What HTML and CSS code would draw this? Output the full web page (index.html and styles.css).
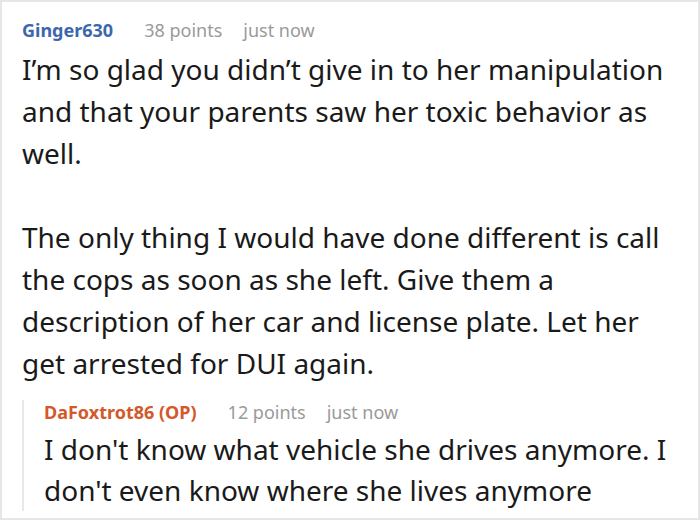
FILE: index.html
```html
<!DOCTYPE html>
<html>
<head>
<meta charset="utf-8">
<link rel="stylesheet" href="styles.css">
</head>
<body>
<div class="frame">
  <div class="comment">
    <div class="meta">
      <span class="author">Ginger630</span>
      <span class="points">38 points</span>
      <span class="time">just now</span>
    </div>
    <div class="body">
      <p>I’m so glad you didn’t give in to her manipulation and that your parents saw her toxic behavior as well.</p>
      <p>The only thing I would have done different is call the cops as soon as she left. Give them a description of her car and license plate. Let her get arrested for DUI again.</p>
    </div>
    <div class="reply">
      <div class="meta">
        <span class="author op">DaFoxtrot86 (OP)</span>
        <span class="points">12 points</span>
        <span class="time">just now</span>
      </div>
      <div class="body reply-body">
        <p>I don't know what vehicle she drives anymore. I don't even know where she lives anymore</p>
      </div>
    </div>
  </div>
</div>
</body>
</html>
```

FILE: styles.css
```css
html, body {
  margin: 0;
  padding: 0;
  background: #ffffff;
}
.frame {
  width: 700px;
  height: 520px;
  box-sizing: border-box;
  border: 2px solid #e6e6e6;
  overflow: hidden;
  font-family: "Noto Sans", sans-serif;
}
.comment {
  padding: 16px 20px 0 20px;
}
.meta {
  display: flex;
  align-items: baseline;
  font-size: 18px;
  line-height: 24px;
}
.author {
  font-weight: bold;
  color: #3b68ad;
  margin-right: 31px;
}
.author.op {
  color: #d4592a;
}
.points {
  color: #9a9a9a;
  margin-right: 21px;
}
.time {
  color: #9a9a9a;
}
.body {
  margin-top: 6px;
  font-size: 28px;
  line-height: 42px;
  color: #1a1a1a;
}
.body p {
  margin: 0 0 42px 0;
}
.body p:last-child {
  margin-bottom: 0;
}
.reply {
  margin-top: 16px;
  border-left: 2px solid #e8e8e8;
  padding-left: 20px;
}
.reply-body {
  margin-top: 5px;
  line-height: 41px;
}
```
